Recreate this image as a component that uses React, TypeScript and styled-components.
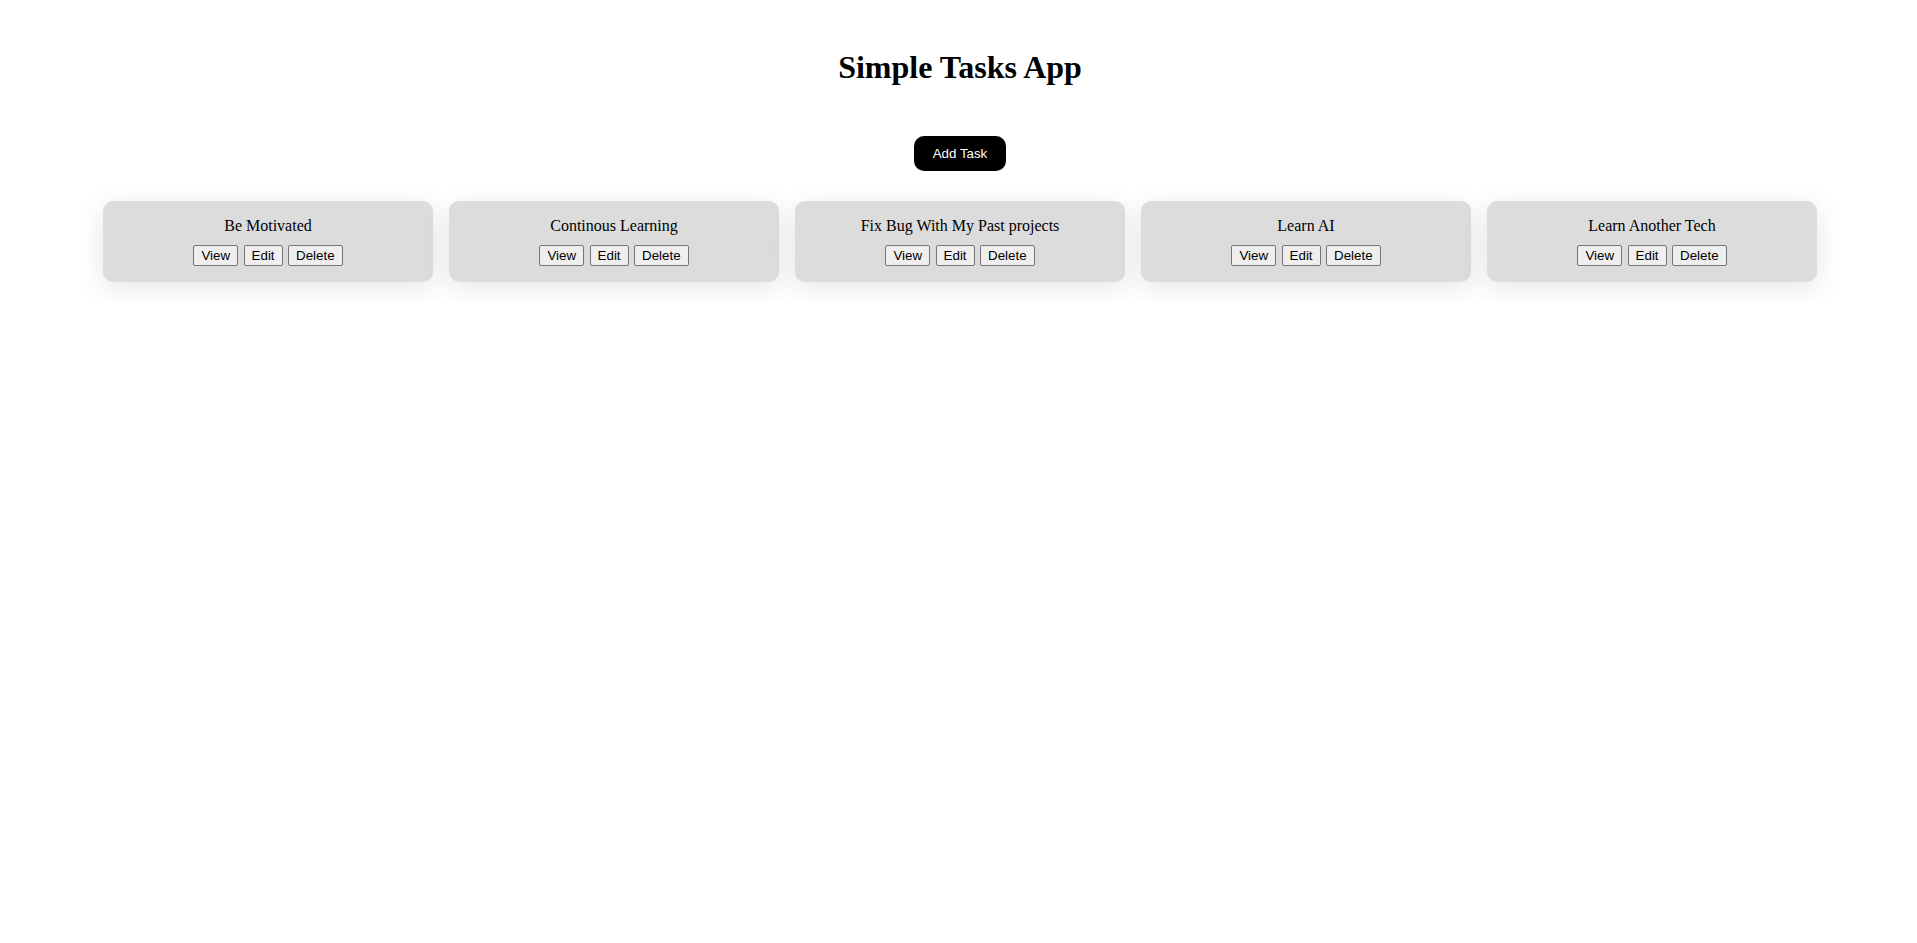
import React from "react";
import styled, { createGlobalStyle } from "styled-components";

const GlobalStyle = createGlobalStyle`
  html, body {
    background: #ffffff;
  }
  body {
    margin: 8px;
    font-family: "Liberation Serif", "Times New Roman", serif;
    color: #000;
  }
`;

const Page = styled.div`
  padding: 20px 0 20px 3px;
`;

const Title = styled.h1`
  font-family: "Liberation Serif", "Times New Roman", serif;
  font-size: 32px;
  font-weight: bold;
  text-align: center;
  margin: 21.44px 0;
`;

const Toolbar = styled.div`
  display: flex;
  justify-content: center;
  padding: 28px 0 30px;
`;

const AddButton = styled.button`
  font-family: "Liberation Sans", Arial, sans-serif;
  font-size: 13.333px;
  line-height: 15px;
  color: #fff;
  background: #000;
  border: none;
  border-radius: 10px;
  padding: 10px 18.5px;
  cursor: pointer;
`;

const CardRow = styled.div`
  display: flex;
  justify-content: center;
  gap: 16.5px;
`;

const Card = styled.div`
  width: 329.5px;
  box-sizing: border-box;
  background: #dcdcdc;
  border-radius: 10px;
  padding: 16px 15px 16px;
  box-shadow: 0 6px 28px rgba(0, 0, 0, 0.1);
  text-align: center;
`;

const CardTitle = styled.div`
  font-family: "Liberation Serif", "Times New Roman", serif;
  font-size: 16px;
  margin-bottom: 10px;
`;

const Actions = styled.div`
  display: flex;
  justify-content: center;
  gap: 5.5px;
`;

const ActionButton = styled.button`
  font-family: "Liberation Sans", Arial, sans-serif;
  font-size: 13.333px;
  line-height: 15px;
  color: #000;
  background: #efefef;
  border: 1px solid #767676;
  border-radius: 2px;
  padding: 2px 7px;
  cursor: pointer;
`;

const tasks = [
  "Be Motivated",
  "Continous Learning",
  "Fix Bug With My Past projects",
  "Learn AI",
  "Learn Another Tech",
];

export default function App() {
  return (
    <>
      <GlobalStyle />
      <Page>
        <Title>Simple Tasks App</Title>
        <Toolbar>
          <AddButton>Add Task</AddButton>
        </Toolbar>
        <CardRow>
          {tasks.map((t) => (
            <Card key={t}>
              <CardTitle>{t}</CardTitle>
              <Actions>
                <ActionButton>View</ActionButton>
                <ActionButton>Edit</ActionButton>
                <ActionButton>Delete</ActionButton>
              </Actions>
            </Card>
          ))}
        </CardRow>
      </Page>
    </>
  );
}
